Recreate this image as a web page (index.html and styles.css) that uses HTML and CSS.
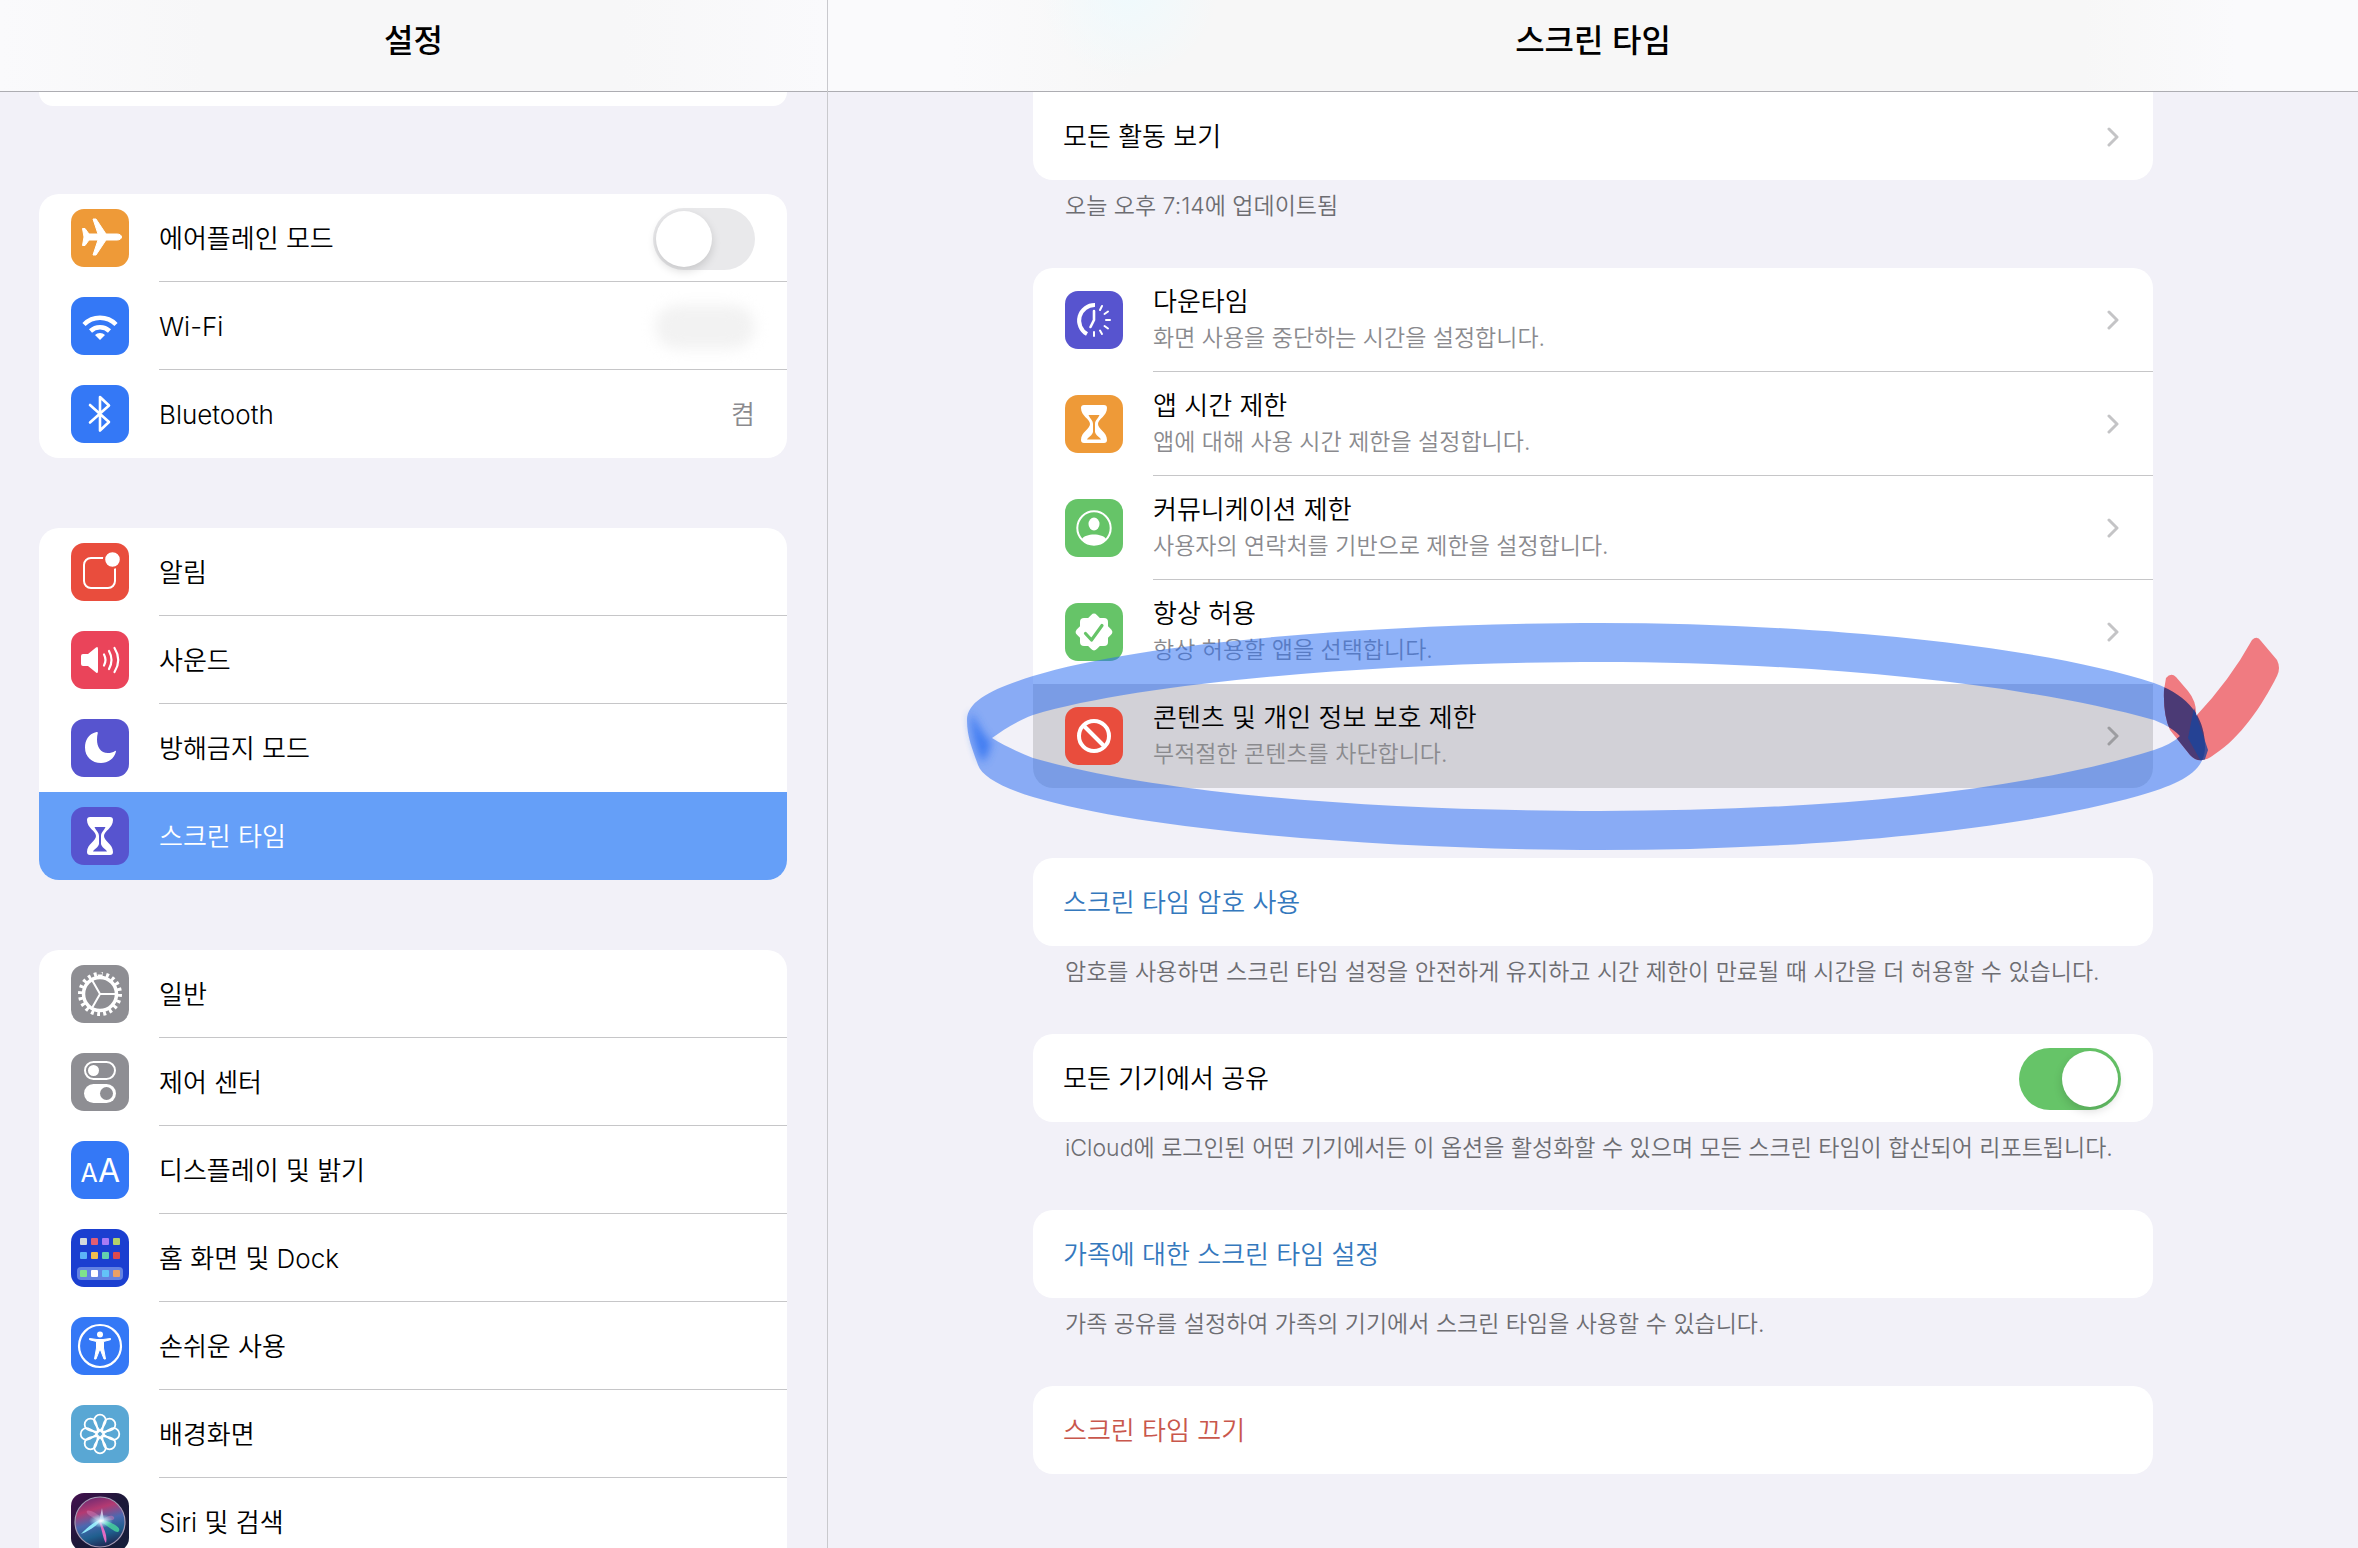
FILE: index.html
```html
<!DOCTYPE html>
<html lang="ko">
<head>
  <meta charset="UTF-8">
  <meta name="viewport" content="width=device-width, initial-scale=1.0">
  <title>설정 - 스크린 타임</title>
  <link rel="stylesheet" href="styles.css">
</head>
<body>
<svg class="defs" aria-hidden="true">
  <symbol id="chevron" viewBox="0 0 12 20">
    <path d="M2 2 L10 10 L2 18" fill="none" stroke="currentColor" stroke-width="3" stroke-linecap="round" stroke-linejoin="round"/>
  </symbol>
  <symbol id="hourglass" viewBox="0 0 58 58">
    <path fill="#fff" fill-rule="evenodd" d="M19 10H39Q42 10 42 13C42 21 33 24 33 29S42 37 42 45Q42 48 39 48H19Q16 48 16 45C16 37 25 34 25 29S16 21 16 13Q16 10 19 10Z M23.5 20H34.5C33 24 30 25 30 29V37C31 41 34 41 36 44.5H22C24 41 27 41 28 37V29C28 25 25 24 23.5 20Z"/>
  </symbol>
</svg>

<div class="app">
  <nav class="sidebar">
    <header class="bar"><h1>설정</h1></header>
    <div class="list">
      <div class="card card-cut"></div>

      <div class="card">
        <label class="row" for="airplane">
          <svg class="icon orange" viewBox="0 0 58 58"><path fill="#fff" stroke="#fff" stroke-linejoin="round" d="M46 25C49 25 50.5 26.5 50.5 28S49 31 46 31H35L25 46H22L27 31H18L14 36.5H11.5L13 28L11.5 19.5H14L18 25H27L22 10H25L35 25Z"/></svg>
          <span class="row-body">에어플레인 모드 <input type="checkbox" class="switch" id="airplane"></span>
        </label>
        <a class="row" href="#wifi">
          <svg class="icon blue" viewBox="0 0 58 58"><g fill="none" stroke="#fff" stroke-width="4.5"><path d="M13 27.5A22.5 22.5 0 0 1 45 27.5"/><path d="M19.5 34A14 14 0 0 1 38.5 34"/></g><path fill="#fff" d="M29 43L24 38A7 7 0 0 1 34 38Z"/></svg>
          <span class="row-body">Wi-Fi <span class="masked"></span></span>
        </a>
        <a class="row" href="#bluetooth">
          <svg class="icon blue" viewBox="0 0 58 58"><path fill="none" stroke="#fff" stroke-width="2.6" stroke-linejoin="round" stroke-linecap="round" d="M19 20L38 37L29 45.5V12L38 20.5L19 37.5"/></svg>
          <span class="row-body">Bluetooth <span class="value">켬</span></span>
        </a>
      </div>

      <div class="card">
        <a class="row" href="#notifications">
          <svg class="icon red" viewBox="0 0 58 58"><rect x="13" y="15" width="31" height="30" rx="7" fill="none" stroke="#fff" stroke-width="2"/><circle cx="41.5" cy="16.5" r="8.5" fill="#fff" stroke="#e94d3d" stroke-width="2.4"/></svg>
          <span class="row-body">알림</span>
        </a>
        <a class="row" href="#sounds">
          <svg class="icon pink" viewBox="0 0 58 58"><path fill="#fff" d="M12 23H17L25 16.5Q27 15 27 18V40Q27 43 25 41.5L17 35H12Q10 35 10 33V25Q10 23 12 23Z"/><g fill="none" stroke="#fff" stroke-width="2.2" stroke-linecap="round"><path d="M33 23.5Q36 29 33 34.5"/><path d="M38 20Q43 29 38 38"/><path d="M43.5 17Q51 29 43.5 41"/></g></svg>
          <span class="row-body">사운드</span>
        </a>
        <a class="row no-line" href="#dnd">
          <svg class="icon indigo" viewBox="0 0 58 58"><path fill="#fff" d="M25.5 13C17 15 14 22 14 28.5C14 38 21 44 30 44C37 44 43 40 45 32.5Q45 31.5 44 32C42 33.5 39.5 34 37 34C29.5 34 26 28 26 20.5Q26 17 26.8 14Q27 12.7 25.5 13Z"/></svg>
          <span class="row-body">방해금지 모드</span>
        </a>
        <a class="row active" href="#screentime">
          <svg class="icon indigo"><use href="#hourglass"/></svg>
          <span class="row-body">스크린 타임</span>
        </a>
      </div>

      <div class="card">
        <a class="row" href="#general">
          <svg class="icon gray" viewBox="0 0 58 58"><g fill="none" stroke="#fff"><circle cx="29" cy="29" r="16.5" stroke-width="3.5"/><circle cx="29" cy="29" r="19.5" stroke-width="5" pathLength="60" stroke-dasharray="1.4 1.6"/><path stroke-width="2" d="M29 29H45M29 29L21 15M29 29L21 43"/></g></svg>
          <span class="row-body">일반</span>
        </a>
        <a class="row" href="#control">
          <svg class="icon gray" viewBox="0 0 58 58"><rect x="14" y="9" width="30" height="17" rx="8.5" fill="none" stroke="#fff" stroke-width="2"/><circle cx="22.5" cy="17.5" r="5.5" fill="#fff"/><rect x="13" y="31" width="32" height="19" rx="9.5" fill="#fff"/><circle cx="35.5" cy="40.5" r="6.5" fill="#8e8e93"/></svg>
          <span class="row-body">제어 센터</span>
        </a>
        <a class="row" href="#display">
          <svg class="icon blue" viewBox="0 0 58 58"><g class="aa" fill="#fff" text-anchor="middle"><text x="18" y="41" font-size="25">A</text><text x="38" y="41" font-size="32">A</text></g></svg>
          <span class="row-body">디스플레이 및 밝기</span>
        </a>
        <a class="row" href="#home">
          <svg class="icon home" viewBox="0 0 58 58">
            <rect x="6" y="38" width="46" height="13" rx="4" fill="#6382e2"/>
            <rect x="9" y="9" width="7" height="7" rx="1" fill="#d3d9dc"/><rect x="20" y="9" width="7" height="7" rx="1" fill="#e35e74"/><rect x="31" y="9" width="7" height="7" rx="1" fill="#a87bf5"/><rect x="42" y="9" width="7" height="7" rx="1" fill="#b4d16b"/>
            <rect x="9" y="23" width="7" height="7" rx="1" fill="#5cb4f7"/><rect x="20" y="23" width="7" height="7" rx="1" fill="#f2be4e"/><rect x="31" y="23" width="7" height="7" rx="1" fill="#63d2ae"/><rect x="42" y="23" width="7" height="7" rx="1" fill="#dd4a4c"/>
            <rect x="9" y="41" width="7" height="7" rx="1" fill="#7fe38b"/><rect x="20" y="41" width="7" height="7" rx="1" fill="#fff"/><rect x="31" y="41" width="7" height="7" rx="1" fill="#63c3f8"/><rect x="42" y="41" width="7" height="7" rx="1" fill="#eba064"/>
          </svg>
          <span class="row-body">홈 화면 및 Dock</span>
        </a>
        <a class="row" href="#accessibility">
          <svg class="icon blue" viewBox="0 0 58 58"><circle cx="29" cy="29" r="21" fill="none" stroke="#fff" stroke-width="2.2"/><circle cx="29" cy="17.5" r="3" fill="#fff"/><path fill="#fff" stroke="#fff" stroke-linejoin="round" d="M18.5 21.5L26 22.5H32L39.5 21.5V22.7L32.5 24.5V31L34.5 42H33L29.5 33H28.5L25 42H23.5L25.5 31V24.5L18.5 22.7Z"/></svg>
          <span class="row-body">손쉬운 사용</span>
        </a>
        <a class="row" href="#wallpaper">
          <svg class="icon sky" viewBox="0 0 58 58"><defs><path id="petal" d="M29 26C26 22 23.2 19 23.2 15.5A5.8 5.8 0 0 1 34.8 15.5C34.8 19 32 22 29 26Z"/></defs><g fill="none" stroke="#fff" stroke-width="1.8"><use href="#petal"/><use href="#petal" transform="rotate(45 29 29)"/><use href="#petal" transform="rotate(90 29 29)"/><use href="#petal" transform="rotate(135 29 29)"/><use href="#petal" transform="rotate(180 29 29)"/><use href="#petal" transform="rotate(225 29 29)"/><use href="#petal" transform="rotate(270 29 29)"/><use href="#petal" transform="rotate(315 29 29)"/><circle cx="29" cy="29" r="3.5"/></g></svg>
          <span class="row-body">배경화면</span>
        </a>
        <a class="row" href="#siri">
          <svg class="icon siri" viewBox="0 0 58 58">
            <defs>
              <linearGradient id="siriOrb" x1=".3" y1="0" x2=".6" y2="1"><stop offset="0" stop-color="#6d2a72"/><stop offset=".25" stop-color="#b43a72"/><stop offset=".5" stop-color="#4c68b0"/><stop offset=".75" stop-color="#1f5f8e"/><stop offset="1" stop-color="#1f2550"/></linearGradient>
              <radialGradient id="siriGlow"><stop offset="0" stop-color="#fff"/><stop offset=".4" stop-color="#c4f0ff" stop-opacity=".7"/><stop offset="1" stop-color="#8ee" stop-opacity="0"/></radialGradient>
            </defs>
            <circle cx="29" cy="29" r="25" fill="url(#siriOrb)" stroke="#a59bb5" stroke-width="1.2"/>
            <path d="M28 28C20 24 14 20 16 18S30 22 31 27C40 19 46 24 42 27Z" fill="#d27ab4" opacity=".5"/>
            <path d="M30 26C42 30 50 34 48 38S36 32 28 28Z" fill="#48d69c" opacity=".8"/>
            <path d="M30 27C26 33 16 39 10 41C16 35 22 29 31 26Z" fill="#8fe7fa"/>
            <path d="M29 27C32 34 37 42 35 50C32 46 31 36 28 29Z" fill="#e26bc4"/>
            <path d="M28 29L31 15L33 28Z" fill="#e5d8f5" opacity=".8"/>
            <ellipse cx="30" cy="28" rx="12" ry="7" fill="url(#siriGlow)"/>
          </svg>
          <span class="row-body">Siri 및 검색</span>
        </a>
      </div>
    </div>
  </nav>

  <main class="detail">
    <header class="bar bar-detail"><h2>스크린 타임</h2></header>
    <div class="content">
      <section>
        <div class="card card-open">
          <a class="row text-row" href="#activity"><span class="row-body">모든 활동 보기 <svg class="chevron"><use href="#chevron"/></svg></span></a>
        </div>
        <p class="note">오늘 오후 7:14에 업데이트됨</p>
      </section>

      <section class="options">
        <div class="card">
          <a class="row tall" href="#downtime">
            <svg class="icon indigo" viewBox="0 0 58 58"><g fill="none" stroke="#fff" stroke-linecap="round"><path stroke-width="4" stroke-linecap="butt" d="M30 14A15.5 15.5 0 0 0 22 43"/><path stroke-width="2.6" stroke-linejoin="round" d="M29 20V29L25.5 36"/><path stroke-width="2" d="M35 19L37 15M39.5 23L43 20.5M41 29H45M39.5 35L43 37.5M35 39.5L37 43M29 41V45"/></g></svg>
            <span class="row-body"><span class="texts"><span>다운타임</span><small>화면 사용을 중단하는 시간을 설정합니다.</small></span><svg class="chevron"><use href="#chevron"/></svg></span>
          </a>
          <a class="row tall" href="#limits">
            <svg class="icon orange"><use href="#hourglass"/></svg>
            <span class="row-body"><span class="texts"><span>앱 시간 제한</span><small>앱에 대해 사용 시간 제한을 설정합니다.</small></span><svg class="chevron"><use href="#chevron"/></svg></span>
          </a>
          <a class="row tall" href="#communication">
            <svg class="icon green" viewBox="0 0 58 58"><circle cx="29" cy="29" r="16.7" fill="none" stroke="#fff" stroke-width="2"/><ellipse cx="29" cy="25" rx="5.5" ry="6.5" fill="#fff"/><path fill="#fff" d="M17 40C20 34 38 34 41 40C37 47 21 47 17 40Z"/></svg>
            <span class="row-body"><span class="texts"><span>커뮤니케이션 제한</span><small>사용자의 연락처를 기반으로 제한을 설정합니다.</small></span><svg class="chevron"><use href="#chevron"/></svg></span>
          </a>
          <a class="row tall no-line" href="#allowed">
            <svg class="icon green" viewBox="0 0 58 58"><rect x="15" y="15" width="28" height="28" rx="4" fill="#fff"/><rect x="15" y="15" width="28" height="28" rx="4" fill="#fff" transform="rotate(45 29 29)"/><path fill="none" stroke="#66c468" stroke-width="3.2" stroke-linecap="round" stroke-linejoin="round" d="M20.5 30.5L26.5 37L37 22.5"/></svg>
            <span class="row-body"><span class="texts"><span>항상 허용</span><small>항상 허용할 앱을 선택합니다.</small></span><svg class="chevron"><use href="#chevron"/></svg></span>
          </a>
          <a class="row tall pressed" href="#privacy">
            <svg class="icon red" viewBox="0 0 58 58"><g fill="none" stroke="#fff" stroke-width="4"><circle cx="29" cy="29" r="15"/><path d="M18.5 18.5L39.5 39.5"/></g></svg>
            <span class="row-body"><span class="texts"><span>콘텐츠 및 개인 정보 보호 제한</span><small>부적절한 콘텐츠를 차단합니다.</small></span><svg class="chevron"><use href="#chevron"/></svg></span>
          </a>
        </div>
        <!-- marker ring and check -->
        <svg class="marker" viewBox="960 610 1330 250" aria-hidden="true">
          <defs>
            <path id="ring" clip-rule="evenodd" fill-rule="evenodd" d="M967 720C967 700 995 688 1033 676C1150 640 1400 623 1600 623C1810 623 2040 645 2154 683C2190 696 2205 718 2205 747C2205 772 2180 784 2138 796C2010 832 1800 850 1600 850C1400 850 1150 832 1033 797C1000 787 982 776 978 765C973 750 967 738 967 720Z M992 738C1003 730 1015 722 1033 715C1150 680 1400 662 1600 662C1790 662 2010 680 2154 720Q2172 727 2180 736Q2172 744 2154 750C2010 795 1800 811 1600 811C1400 811 1170 797 1033 758C1018 752 1003 745 992 738Z"/>
            <path id="check" d="M2166 678Q2171 672 2176 677L2188 691Q2197 702 2196 716Q2230 680 2252 640Q2257 635 2261 641L2277 660Q2281 668 2277 676C2262 706 2240 738 2215 754Q2200 766 2190 755L2170 730Q2163 715 2164 690Z"/>
            <clipPath id="checkClip"><use href="#check"/></clipPath>
            <filter id="soft" x="-50%" y="-50%" width="200%" height="200%"><feGaussianBlur stdDeviation="4"/></filter>
          </defs>
          <use href="#ring" fill="#2c6ef1" fill-opacity=".53"/>
          <path d="M970 712C978 722 984 738 992 742C988 752 988 758 982 762C976 752 971 736 970 712Z" fill="#2c6ef1" opacity=".75" filter="url(#soft)"/>
          <use href="#check" fill="#ee3c41" fill-opacity=".65"/>
          <g clip-path="url(#checkClip)">
            <use href="#ring" fill="#2a2f72" fill-opacity=".8"/>
            <path d="M2194 708L2208 750L2203 765L2188 738Z" fill="#1c459c" opacity=".8"/>
          </g>
        </svg>
      </section>

      <section>
        <div class="card"><button type="button" class="row text-row link">스크린 타임 암호 사용</button></div>
        <p class="note">암호를 사용하면 스크린 타임 설정을 안전하게 유지하고 시간 제한이 만료될 때 시간을 더 허용할 수 있습니다.</p>
      </section>

      <section>
        <div class="card">
          <label class="row text-row" for="share"><span class="row-body">모든 기기에서 공유 <input type="checkbox" class="switch" id="share" checked></span></label>
        </div>
        <p class="note">iCloud에 로그인된 어떤 기기에서든 이 옵션을 활성화할 수 있으며 모든 스크린 타임이 합산되어 리포트됩니다.</p>
      </section>

      <section>
        <div class="card"><button type="button" class="row text-row link">가족에 대한 스크린 타임 설정</button></div>
        <p class="note">가족 공유를 설정하여 가족의 기기에서 스크린 타임을 사용할 수 있습니다.</p>
      </section>

      <section>
        <div class="card"><button type="button" class="row text-row danger">스크린 타임 끄기</button></div>
      </section>
    </div>
  </main>
</div>
</body>
</html>
```
FILE: styles.css
```css
* {
    box-sizing: border-box;
}
body {
    margin: 0;
    background-color: #f2f1f8;
    color: #000;
    font-family: Inter, "Noto Sans CJK KR", sans-serif;
    font-size: 26px;
    font-weight: 350;
    line-height: 36px;
}
a {
    color: inherit;
    text-decoration: none;
}
.defs {
    display: none;
}
.app {
    display: grid;
    grid-template-columns: 828px 1fr;
    height: 100vh;
    overflow: hidden;
}
.sidebar {
    border-right: 1px solid #c9c9cd;
    overflow: hidden;
}
.detail {
    overflow: hidden;
}

/* top bars */
.bar {
    height: 92px;
    padding-bottom: 9px;
    display: flex;
    align-items: center;
    justify-content: center;
    background: linear-gradient(90deg, #fafafc, #f7f7f8 25%, #f7f7f8 75%, #fafafc);
    border-bottom: 1px solid #adadb2;
}
.bar-detail {
    background: radial-gradient(circle at 300px -10px, #effafd, transparent 90px), linear-gradient(90deg, #fafafc 8%, #f7f7f7 20%, #f7f7f7 82%, #fafafc 92%);
}
.bar h1, .bar h2 {
    margin: 0;
    font-size: 32px;
    font-weight: 500;
}

/* lists */
.list {
    padding: 0 40px 0 39px;
}
.card {
    background-color: #fff;
    border-radius: 20px;
    overflow: hidden;
    margin-bottom: 70px;
}
.card-cut {
    height: 14px;
    margin-bottom: 88px;
    border-radius: 0 0 20px 20px;
}
.card-open {
    border-radius: 0 0 20px 20px;
}
.row {
    display: flex;
    align-items: center;
    gap: 30px;
    height: 88px;
    padding-left: 32px;
}
.row-body {
    flex: 1;
    align-self: stretch;
    display: flex;
    align-items: center;
    justify-content: space-between;
    padding-top: 2px;
    padding-right: 32px;
    border-bottom: 1px solid #c6c6c8;
}
.row:last-child .row-body, .no-line .row-body {
    border-bottom-color: transparent;
}
.tall {
    height: 104px;
}
.tall .row-body {
    padding-top: 0;
}
.text-row {
    padding-left: 30px;
}
.active {
    background-color: #659ff8;
    color: #fff;
}
.pressed {
    background-color: #d2d1d7;
}
button.row {
    width: 100%;
    padding-top: 2px;
    border: none;
    background: none;
    font: inherit;
    text-align: left;
    cursor: pointer;
}
.link {
    color: #3478bd;
}
.danger {
    color: #c9574c;
}
.texts {
    display: flex;
    flex-direction: column;
}
.texts small {
    font-size: 23px;
    color: #8a8a8e;
}
.value {
    color: #8a8a8e;
}
.masked {
    width: 100px;
    height: 44px;
    border-radius: 22px;
    background-color: #f2f2f2;
    filter: blur(7px);
}
.chevron {
    width: 12px;
    height: 20px;
    margin-right: 2px;
    color: #c4c4c6;
}
.pressed .chevron {
    color: #9d9da1;
}

/* icons */
.icon {
    flex: none;
    width: 58px;
    height: 58px;
    border-radius: 13px;
}
.orange { background-color: #ee9a38; }
.blue { background-color: #3478f6; }
.red { background-color: #e94d3d; }
.pink { background-color: #ea445a; }
.indigo { background-color: #5754cf; }
.gray { background-color: #8e8e93; }
.green { background-color: #66c468; }
.sky { background-color: #59a7d4; }
.home { background-color: #1b3fd0; }
.siri { background: linear-gradient(135deg, #45104f, #1c1838 50%, #14203c); }
.aa {
    font-family: Inter, sans-serif;
    font-weight: 400;
}

/* switch */
.switch {
    appearance: none;
    width: 102px;
    height: 62px;
    margin: 0;
    padding: 3px;
    border-radius: 31px;
    background-color: #e9e9eb;
    cursor: pointer;
}
.switch::before {
    content: "";
    display: block;
    width: 56px;
    height: 56px;
    border-radius: 50%;
    background-color: #fff;
    box-shadow: 0 4px 10px rgba(0, 0, 0, 0.15);
}
.switch:checked {
    background-color: #66c468;
}
.switch:checked::before {
    margin-left: 40px;
}

/* detail */
.content {
    max-width: 1120px;
    margin: 0 auto;
}
.note {
    margin: -70px 0 0;
    padding: 8px 32px 44px;
    font-size: 23px;
    color: #6d6d72;
}
.options {
    position: relative;
}
.marker {
    position: absolute;
    left: -73px;
    top: 342px;
    width: 1330px;
    height: 250px;
    pointer-events: none;
}
```
